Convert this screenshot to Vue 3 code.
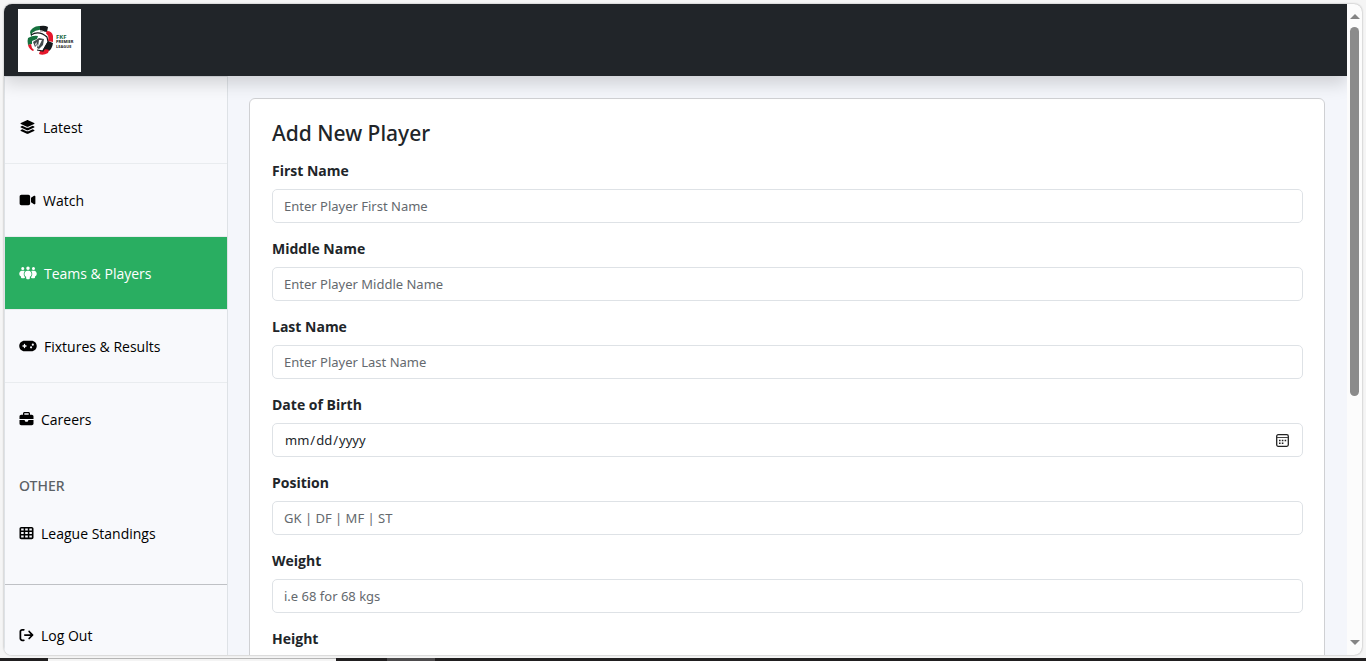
<script setup>
const icons = {
  layers: {
    w: 576,
    d: 'M264.5 5.2c14.9-6.9 32.1-6.9 47 0l218.6 101c8.5 3.9 13.9 12.4 13.9 21.8s-5.4 17.9-13.9 21.8l-218.6 101c-14.9 6.9-32.1 6.9-47 0L45.9 149.8C37.4 145.8 32 137.3 32 128s5.4-17.9 13.9-21.8L264.5 5.2zM476.9 209.6l53.2 24.6c8.5 3.9 13.9 12.4 13.9 21.8s-5.4 17.9-13.9 21.8l-218.6 101c-14.9 6.9-32.1 6.9-47 0L45.9 277.8C37.4 273.8 32 265.3 32 256s5.4-17.9 13.9-21.8l53.2-24.6 152 70.2c23.4 10.8 50.4 10.8 73.8 0l152-70.2zm-152 198.2l152-70.2 53.2 24.6c8.5 3.9 13.9 12.4 13.9 21.8s-5.4 17.9-13.9 21.8l-218.6 101c-14.9 6.9-32.1 6.9-47 0L45.9 405.8C37.4 401.8 32 393.3 32 384s5.4-17.9 13.9-21.8l53.2-24.6 152 70.2c23.4 10.8 50.4 10.8 73.8 0z',
  },
  video: {
    w: 576,
    d: 'M0 128C0 92.7 28.7 64 64 64H320c35.3 0 64 28.7 64 64V384c0 35.3-28.7 64-64 64H64c-35.3 0-64-28.7-64-64V128zM559.1 99.8c10.4 5.6 16.9 16.4 16.9 28.2V384c0 11.8-6.5 22.6-16.9 28.2s-23 5-32.9-1.6l-96-64L416 337.1V174.9l14.2-9.5 96-64c9.8-6.5 22.4-7.2 32.9-1.6z',
  },
  people: {
    w: 640,
    d: 'M72 88a56 56 0 1 1 112 0A56 56 0 1 1 72 88zM464 88a56 56 0 1 1 112 0 56 56 0 1 1-112 0zM256 80a64 64 0 1 1 128 0 64 64 0 1 1-128 0zM96 170h56c18 0 36 6 50 18-28 28-37 63-37 108 0 44 11 80 43 107v13c0 18-14 32-32 32H96c-18 0-32-14-32-32v-34C26 364 0 326 0 282c0-59 42-112 96-112zM544 170h-56c-18 0-36 6-50 18 28 28 37 63 37 108 0 44-11 80-43 107v13c0 18 14 32 32 32h80c18 0 32-14 32-32v-34c38-18 64-56 64-100 0-59-42-112-96-112zM298 170h44c62 0 106 60 106 122 0 46-21 85-60 104v52c0 18-14 32-32 32h-72c-18 0-32-14-32-32v-52c-39-19-60-58-60-104 0-62 44-122 106-122z',
  },
  gamepad: {
    w: 640,
    d: 'M192 64C86 64 0 150 0 256S86 448 192 448H448c106 0 192-86 192-192s-86-192-192-192H192zM496 168a40 40 0 1 1 0 80 40 40 0 1 1 0-80zM392 304a40 40 0 1 1 80 0 40 40 0 1 1 -80 0zM168 200c0-13.3 10.7-24 24-24s24 10.7 24 24v32h32c13.3 0 24 10.7 24 24s-10.7 24-24 24H216v32c0 13.3-10.7 24-24 24s-24-10.7-24-24V280H136c-13.3 0-24-10.7-24-24s10.7-24 24-24h32V200z',
  },
  briefcase: {
    w: 512,
    d: 'M184 48H328c4.4 0 8 3.6 8 8V96H176V56c0-4.4 3.6-8 8-8zm-56 8V96H64C28.7 96 0 124.7 0 160v96H192 320 512V160c0-35.3-28.7-64-64-64H384V56c0-30.9-25.1-56-56-56H184c-30.9 0-56 25.1-56 56zM512 288H320v32c0 17.7-14.3 32-32 32H224c-17.7 0-32-14.3-32-32V288H0V416c0 35.3 28.7 64 64 64H448c35.3 0 64-28.7 64-64V288z',
  },
  table: {
    w: 512,
    d: 'M64 32H448c35 0 64 29 64 64V416c0 35-29 64-64 64H64c-35 0-64-29-64-64V96C0 61 29 32 64 32zM60 92v76h92V92zM208 92v76h96V92zM360 92v76h92V92zM60 220v76h92v-76zM208 220v76h96v-76zM360 220v76h92v-76zM60 348v76h92v-76zM208 348v76h96v-76zM360 348v76h92v-76z',
  },
  logout: {
    w: 512,
    d: 'M502.6 278.6c12.5-12.5 12.5-32.8 0-45.3l-128-128c-12.5-12.5-32.8-12.5-45.3 0s-12.5 32.8 0 45.3L402.7 224H192c-17.7 0-32 14.3-32 32s14.3 32 32 32H402.7l-73.4 73.4c-12.5 12.5-12.5 32.8 0 45.3s32.8 12.5 45.3 0l128-128zM160 96c17.7 0 32-14.3 32-32s-14.3-32-32-32H96C43 32 0 75 0 128V384c0 53 43 96 96 96h64c17.7 0 32-14.3 32-32s-14.3-32-32-32H96c-17.7 0-32-14.3-32-32V128c0-17.7 14.3-32 32-32h64z',
  },
}

const groups = [
  {
    name: 'main',
    items: [
      { label: 'Latest', icon: 'layers' },
      { label: 'Watch', icon: 'video' },
      { label: 'Teams & Players', icon: 'people', active: true },
      { label: 'Fixtures & Results', icon: 'gamepad' },
      { label: 'Careers', icon: 'briefcase' },
    ],
  },
  { name: 'other', title: 'OTHER', items: [{ label: 'League Standings', icon: 'table' }] },
  { name: 'account', items: [{ label: 'Log Out', icon: 'logout' }] },
]

const fields = [
  { id: 'first-name', label: 'First Name', hint: 'Enter Player First Name' },
  { id: 'middle-name', label: 'Middle Name', hint: 'Enter Player Middle Name' },
  { id: 'last-name', label: 'Last Name', hint: 'Enter Player Last Name' },
  { id: 'birth-date', label: 'Date of Birth', type: 'date' },
  { id: 'position', label: 'Position', hint: 'GK | DF | MF | ST' },
  { id: 'weight', label: 'Weight', hint: 'i.e 68 for 68 kgs' },
  { id: 'height', label: 'Height' },
]
</script>

<template>
  <div class="screen">
    <div class="window">
      <div class="page">
        <header class="topbar">
          <a href="#" class="brand" aria-label="FKF Premier League">
            <svg viewBox="0 0 63 63">
              <rect width="63" height="63" fill="#fff" />
              <path d="M12 23C14 18 18 17 23 17l-2 6-8 4z" fill="#16713f" />
              <path d="M22 17q5-1 8 1l-1 5-7-1z" fill="#15191b" />
              <path d="M29 22q5 0 6 5l0 6-5-1-3-6z" fill="#e5182b" />
              <path d="M30 32l5 2q-1 6-4 8l-7 2-1-5z" fill="#15191b" />
              <path d="M22 42q5-3 9-1l-1 3q-5 3-9 1z" fill="#e5182b" />
              <path d="M14 24q6-5 11-2 7 4 5 10l-6 10-5-2-5-6z" fill="#fff" />
              <path d="M13 26q8-5 16 2l1 5-5 9-6-1" fill="none" stroke="#15191b" stroke-width="1.2" />
              <path d="M10 29q5-3 10-2l-1 3-5 2 0 3-4 1q-1-4 0-7z" fill="#16713f" />
              <path d="M10 36l3-1 1 4 2 2-1 1q-4-2-5-6z" fill="#e5182b" />
              <path d="M15 33l6-4 5 1-1 6-4 4-2-1 1-4-3 3z" fill="#454b4d" />
              <path d="M21 31l3 0-3 6-1 1zM17 35l2-2-1 4z" fill="#fff" />
              <path d="M22 22h3" stroke="#777" />
              <g font-family="Open Sans, sans-serif" font-weight="700">
                <text x="38" y="30" font-size="6" fill="#17683f">FKF</text>
                <text x="38" y="34" font-size="4" fill="#111">PREMIER</text>
                <text x="38" y="39" font-size="4" fill="#222">LEAGUE</text>
              </g>
            </svg>
          </a>
        </header>
        <div class="body">
          <nav class="sidebar" aria-label="Main">
            <section v-for="g in groups" :key="g.name" :class="['group', g.name]">
              <h2 v-if="g.title">{{ g.title }}</h2>
              <a v-for="i in g.items" :key="i.label" href="#" :class="['item', { active: i.active }]">
                <svg :class="'w' + icons[i.icon].w" :viewBox="`0 0 ${icons[i.icon].w} 512`" fill="currentColor" fill-rule="evenodd" aria-hidden="true">
                  <path :d="icons[i.icon].d" />
                </svg>
                <span>{{ i.label }}</span>
              </a>
            </section>
          </nav>
          <main>
            <form class="card" @submit.prevent>
              <h1>Add New Player</h1>
              <div v-for="f in fields" :key="f.id" class="field">
                <label :for="f.id">{{ f.label }}</label>
                <input :id="f.id" :type="f.type || 'text'" :placeholder="f.hint" />
              </div>
            </form>
          </main>
        </div>
      </div>
      <div class="scrollbar" aria-hidden="true">
        <i class="up"></i>
        <div class="track"><div class="thumb"></div></div>
        <i class="down"></i>
      </div>
    </div>
    <div class="taskbar" aria-hidden="true"><i class="tab"></i><i class="tile"></i></div>
  </div>
</template>

<style>
body {
  margin: 0;
  overflow: hidden;
}
</style>

<style scoped>
* {
  box-sizing: border-box;
}
.screen {
  height: 100vh;
  display: flex;
  flex-direction: column;
  gap: 3px;
  padding: 4px 0 0;
  background: #f5f5f5;
  font: 14px/21px "Segoe UI", "Open Sans", "Noto Sans", sans-serif;
  color: #212529;
}
.window {
  flex: 1;
  min-height: 0;
  display: flex;
  margin: 0 4px;
  border-radius: 8px;
  overflow: hidden;
  background: #fcfcfc;
  box-shadow: 0 0 2px #999;
}
.page {
  flex: 1;
  min-width: 0;
  display: flex;
  flex-direction: column;
  overflow: hidden;
  background: #f4f6fb;
}
.topbar {
  position: relative;
  z-index: 1;
  flex: none;
  display: flex;
  padding: 5px 14px 4px;
  background: #212529;
  box-shadow: 0 8px 16px rgba(0, 0, 0, 0.15);
}
.brand,
.brand svg {
  display: block;
  width: 63px;
  height: 63px;
}
.body {
  flex: 1;
  min-height: 0;
  display: flex;
}
.sidebar {
  flex: none;
  width: 224px;
  padding-top: 14px;
  background: #f8f9fc;
  border: 1px solid #dee2e6;
  border-bottom: 0;
}
.item {
  display: flex;
  align-items: center;
  gap: 7px;
  padding: 26px 14px 25px;
  color: #000;
  text-decoration: none;
}
.main .item {
  border-bottom: 1px solid #e9ecef;
}
.main .item:last-child {
  border-bottom: 0;
}
.item.active {
  background: #29ae61;
  color: #fff;
}
.item svg {
  flex: none;
  height: 14px;
  margin-bottom: 1px;
}
.w512 {
  width: 15px;
}
.w576 {
  width: 17px;
}
.w640 {
  width: 18px;
}
.other {
  padding-top: 20px;
  border-bottom: 1px solid #bfc1c5;
}
.other .item {
  padding: 27px 14px 40px;
}
.account .item {
  padding: 40px 14px;
}
h1,
h2,
input {
  font-family: "Segoe UI", "Noto Sans", sans-serif;
}
h2 {
  margin: 0;
  padding: 0 14px;
  font-size: 14px;
  line-height: 21px;
  font-weight: 500;
  color: #5c6166;
}
main {
  flex: 1;
  min-width: 0;
  padding: 22px 22px 0 21px;
}
.card {
  min-height: 100%;
  padding: 20px 21px 20px 22px;
  background: #fff;
  border: 1px solid #cfd0d3;
  border-radius: 6px;
}
h1 {
  margin: 0 0 13px;
  font-size: 21px;
  line-height: 28px;
  font-weight: 500;
}
.field {
  margin-bottom: 15px;
}
label {
  display: block;
  margin-bottom: 8px;
  line-height: 21px;
  font-weight: 700;
}
input {
  display: block;
  width: 100%;
  height: 34px;
  padding: 5px 11px;
  border: 1px solid #dee2e6;
  border-radius: 5px;
  background: #fff;
  font-size: 13px;
  color: #212529;
}
input::placeholder {
  color: #64696e;
  opacity: 1;
}
input::-webkit-datetime-edit-fields-wrapper,
input::-webkit-datetime-edit {
  padding: 0;
}
input::-webkit-calendar-picker-indicator {
  width: 13px;
  height: 13px;
  margin-right: 2px;
  padding: 0;
  background: url("data:image/svg+xml,%3Csvg xmlns='http://www.w3.org/2000/svg' viewBox='0 0 13 13'%3E%3Crect x='.7' y='.7' width='11.6' height='11.6' rx='1.5' fill='none' stroke='%23222' stroke-width='1.3'/%3E%3Cpath d='M1 3.5h11' stroke='%23444'/%3E%3Cpath d='M3 6.5h1.6M5.8 6.5h1.6M8.6 6.5h1.6M3 9.3h1.6M5.8 9.3h1.6' stroke='%23222' stroke-width='1.5'/%3E%3C/svg%3E") center / 13px 13px no-repeat;
}
.scrollbar {
  flex: none;
  width: 15px;
  display: flex;
  flex-direction: column;
  align-items: center;
  padding: 10px 0;
}
.up,
.down {
  border: 5px solid transparent;
}
.up {
  border-top: 0;
  border-bottom-color: #858585;
}
.down {
  border-bottom: 0;
  border-top-color: #858585;
}
.track {
  flex: 1;
  padding: 8px 0;
}
.thumb {
  width: 9px;
  height: 61%;
  border-radius: 5px;
  background: #8b8b8b;
}
.taskbar {
  flex: none;
  display: flex;
  gap: 51px;
  height: 3px;
  padding-left: 48px;
  background: #211f20;
}
.tab {
  width: 288px;
  background: #f4f4f4;
  border-top: 1px solid #b5b5b5;
}
.tile {
  width: 48px;
  background: #4d4b4d;
}
</style>
